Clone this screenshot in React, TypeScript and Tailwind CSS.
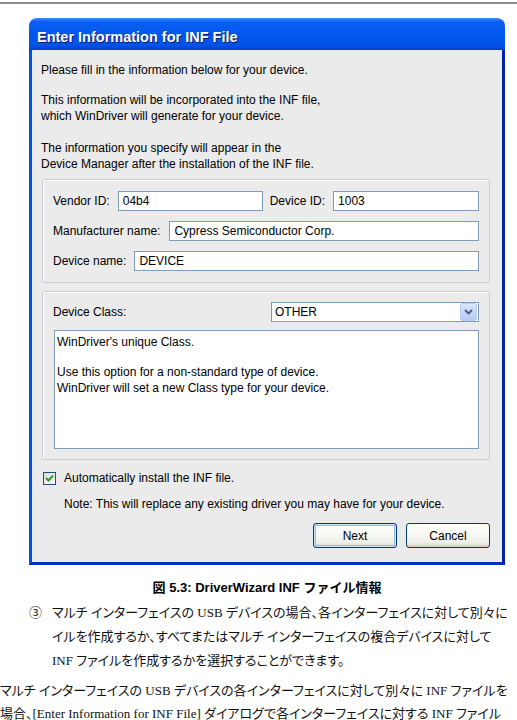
const ui = "font-['Liberation_Sans',Arial,sans-serif] text-[12px] leading-[16px] text-black"

const Field = ({ value, className = '' }: { value: string; className?: string }) => (
  <div className={`flex h-[20px] items-center border border-[#7f9db9] bg-white px-[4px] ${className}`}>{value}</div>
)

const XpButton = ({ label, primary }: { label: string; primary?: boolean }) => (
  <button
    className={`flex h-[25px] w-[84px] items-center justify-center rounded-[3px] border border-[#003c74] bg-[linear-gradient(#ffffff,#f0f0ea_80%,#d6d0c5)] ${
      primary ? 'shadow-[inset_0_0_0_1px_#cee7ff,inset_0_0_0_2px_#98b8ea]' : 'shadow-[inset_0_-1px_0_#d6d0c5]'
    }`}
  >
    {label}
  </button>
)

export default function App() {
  return (
    <div className="h-[720px] w-[517px] overflow-hidden bg-white">
      <div className="mt-[2px] h-[2px] bg-[#8c8c8c]" />

      {/* dialog */}
      <div className={`ml-[29px] mt-[14px] w-[476px] ${ui}`}>
        <div className="flex h-[32px] items-center rounded-t-[8px] bg-[linear-gradient(#3d8df7_0%,#0a5ff0_12%,#0058ee_50%,#0052e6_85%,#003fcc_100%)] pl-[8px] pt-[5px] font-['Liberation_Sans',Arial,sans-serif] text-[14.5px] font-bold text-white [text-shadow:1px_1px_0_#0a1a6a]">
          Enter Information for INF File
        </div>
        <div className="border-x-[3px] border-b-[3px] border-l-[#0350e0] border-r-[#0020a8] border-b-[#0030c0] bg-[#ebebeb] pb-[14px] pt-[12px]">
          <div className="pl-[9px]">
            <p>Please fill in the information below for your device.</p>
            <p className="mt-[14px]">
              This information will be incorporated into the INF file,
              <br />
              which WinDriver will generate for your device.
            </p>
            <p className="mt-[16px]">
              The information you specify will appear in the
              <br />
              Device Manager after the installation of the INF file.
            </p>
          </div>

          <div className="ml-[10px] mr-[12px] mt-[7px] flex flex-col gap-[10px] rounded-[2px] border border-[#cdcdcd] px-[10px] pb-[11px] pt-[11px] shadow-[inset_1px_1px_0_#fff]">
            <div className="flex items-center gap-[8px]">
              <span className="shrink-0">Vendor ID:</span>
              <Field value="04b4" className="w-[145px] shrink-0" />
              <span className="ml-[-1px] shrink-0">Device ID:</span>
              <Field value="1003" className="flex-1" />
            </div>
            <div className="flex items-center gap-[9px]">
              <span className="shrink-0">Manufacturer name:</span>
              <Field value="Cypress Semiconductor Corp." className="flex-1" />
            </div>
            <div className="flex items-center gap-[8px]">
              <span className="shrink-0">Device name:</span>
              <Field value="DEVICE" className="flex-1" />
            </div>
          </div>

          <div className="ml-[10px] mr-[12px] mt-[8px] rounded-[2px] border border-[#cdcdcd] pb-[10px] pl-[10px] pr-[10px] pt-[10px] shadow-[inset_1px_1px_0_#fff]">
            <div className="flex items-center justify-between">
              <span>Device Class:</span>
              <div className="flex h-[20px] w-[208px] items-center border border-[#7f9db9] bg-white pl-[3px] pr-px">
                <span className="flex-1">OTHER</span>
                <div className="flex h-[18px] w-[17px] items-center justify-center rounded-[2px] border border-[#b9cbf3] bg-[linear-gradient(#dbe6fd,#b6cbf6)]">
                  <svg width="9" height="6" viewBox="0 0 9 6">
                    <path d="M1 1 L4.5 4.5 L8 1" fill="none" stroke="#4d6185" strokeWidth="2" />
                  </svg>
                </div>
              </div>
            </div>
            <div className="ml-px mt-[8px] h-[119px] border border-[#7f9db9] bg-white pl-[2px] pt-[3px]">
              <p>WinDriver's unique Class.</p>
              <p className="mt-[14px]">
                Use this option for a non-standard type of device.
                <br />
                WinDriver will set a new Class type for your device.
              </p>
            </div>
          </div>

          <div className="mt-[10px] flex h-[16px] items-center pl-[11px]">
            <div className="flex h-[13px] w-[13px] items-center justify-center border border-[#1c5180] bg-[linear-gradient(135deg,#dcdcd7,#ffffff)]">
              <svg width="9" height="8" viewBox="0 0 9 8">
                <path d="M1 4 L3.5 6.5 L8 1.5" fill="none" stroke="#21a121" strokeWidth="2" />
              </svg>
            </div>
            <span className="ml-[8px]">Automatically install the INF file.</span>
          </div>
          <p className="mt-[10px] pl-[32px]">Note: This will replace any existing driver you may have for your device.</p>

          <div className="mr-[12px] mt-[11px] flex justify-end gap-[9px]">
            <XpButton label="Next" primary />
            <XpButton label="Cancel" />
          </div>
        </div>
      </div>

      {/* caption + body text */}
      <div className="ml-[29px] mt-[13px] w-[476px] text-center font-['Liberation_Sans','Noto_Sans_CJK_JP',sans-serif] text-[13px] font-bold leading-[20px] text-black">
        図 5.3: DriverWizard INF ファイル情報
      </div>

      <div className="font-['Liberation_Serif','Noto_Sans_CJK_JP',serif] text-[13px] text-[#111] [font-feature-settings:'palt']">
        <div className="mt-[3px] flex pl-[29px] leading-[24px]">
          <span className="w-[23px] shrink-0">③</span>
          <div className="whitespace-nowrap">
            <div>マルチ インターフェイスの USB デバイスの場合、各インターフェイスに対して別々に</div>
            <div>イルを作成するか、すべてまたはマルチ インターフェイスの複合デバイスに対して</div>
            <div>INF ファイルを作成するかを選択することができます。</div>
          </div>
        </div>
        <div className="mt-[6px] whitespace-nowrap leading-[23px]">
          <div>マルチ インターフェイスの USB デバイスの各インターフェイスに対して別々に INF ファイルを</div>
          <div>場合、[Enter Information for INF File] ダイアログで各インターフェイスに対する INF ファイル</div>
        </div>
      </div>
    </div>
  )
}
